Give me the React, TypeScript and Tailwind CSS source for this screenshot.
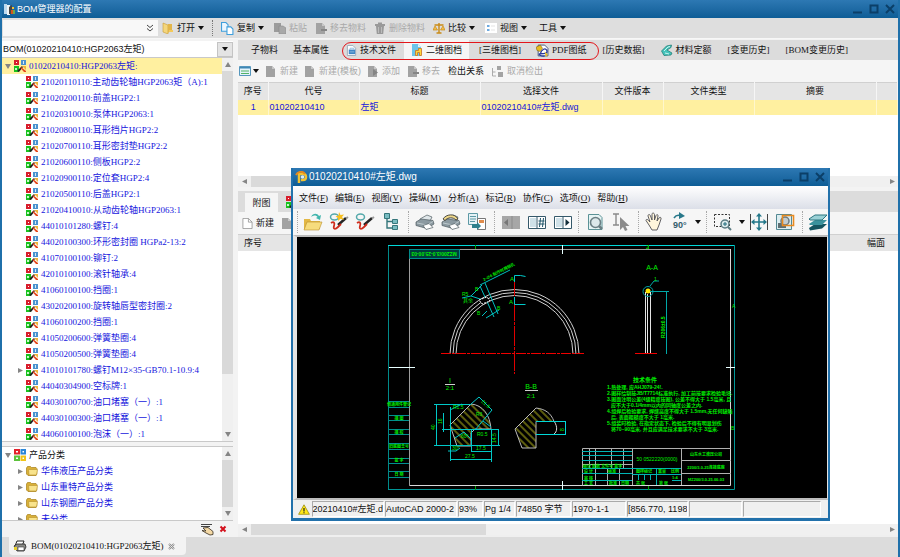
import type { ReactNode } from "react";
import { clsx } from "clsx";

const SANS = "font-['Liberation_Sans','Noto_Sans_CJK_SC',sans-serif]";
const SERIF = "font-['Liberation_Serif','Noto_Sans_CJK_SC',serif]";

const PARTS = [
  "21020110110:主动齿轮轴HGP2063矩（A):1",
  "21020200110:前盖HGP2:1",
  "21020310010:泵体HGP2063:1",
  "21020800110:耳形挡片HGP2:2",
  "21020700110:耳形密封垫HGP2:2",
  "21020600110:侧板HGP2:2",
  "21020900110:定位套HGP2:4",
  "21020500110:后盖HGP2:1",
  "21020410010:从动齿轮轴HGP2063:1",
  "44010101280:螺钉:4",
  "44020100300:环形密封圈 HGPa2-13:2",
  "41070100100:铆钉:2",
  "42010100100:滚针轴承:4",
  "41060100100:挡圈:1",
  "43020200100:旋转轴唇型密封圈:2",
  "41060100200:挡圈:1",
  "41050200600:弹簧垫圈:4",
  "41050200500:弹簧垫圈:4",
  "41010101780:螺钉M12×35-GB70.1-10.9:4",
  "44040304900:空标牌:1",
  "44030100700:油口堵塞（一）:1",
  "44030100300:油口堵塞（一）:1",
  "44060100100:泡沫（一）:1",
];

const CATEGORIES = ["华伟液压产品分类", "山东重特产品分类", "山东钢圈产品分类", "未分类"];

const MENUS = [
  ["文件", "F"],
  ["编辑", "E"],
  ["视图", "V"],
  ["操纵", "M"],
  ["分析", "A"],
  ["标记", "R"],
  ["协作", "C"],
  ["选项", "O"],
  ["帮助", "H"],
];

/* ---------- small icons ---------- */

function Icon({ size = 12, children }: { size?: number; children: ReactNode }) {
  return (
    <svg width={size} height={size} viewBox="0 0 12 12" className="shrink-0" aria-hidden="true">
      {children}
    </svg>
  );
}

function PartIcon() {
  return (
    <Icon>
      <path d="M0 0h5v5H0z" fill="#d81e2c" />
      <path d="M2 2h1v1H2z" fill="#fff" />
      <path d="M7 0h5v5H7z" fill="#4a92cf" />
      <path d="M9 1h1v3H9z" fill="#d5e8f5" />
      <path d="M0 6h5v6H0z" fill="#18c21e" />
      <path d="M1 8h2v2H1z" fill="#c9f5c9" />
      <path d="M3 11l5-5 1 1-4 5z" fill="#222" />
      <path d="M7 7l5 4v1h-2L6.500 8z" fill="#e5471b" />
      <path d="M8 6h4v4z" fill="#f0b43a" />
    </Icon>
  );
}

function CategoryIcon() {
  return (
    <Icon>
      <g fill="none" strokeWidth="2">
        <path d="M1 1h4v3.500H1z" stroke="#e3212b" />
        <path d="M7.500 1h3.500v3.500H7.500z" stroke="#2a86d8" />
        <path d="M1 7.500h4V11H1z" stroke="#5cc23c" />
        <path d="M7.500 7.500h3.500V11H7.500z" stroke="#f0c419" />
      </g>
    </Icon>
  );
}

function FolderIcon() {
  return (
    <Icon>
      <path d="M.5 3l1-1.500h3l1 1H10l.8 1v5.500L10 10.500H2L.5 9z" fill="#d9b037" stroke="#a67f1c" strokeWidth=".7" />
      <path d="M2.500 4.500h9l-1 5.500H3z" fill="#f8e38c" stroke="#b8902a" strokeWidth=".6" />
    </Icon>
  );
}

function OpenIcon() {
  return (
    <Icon>
      <path d="M1 1l5 2v9l-5-2z" fill="#f4d67c" stroke="#c79b36" strokeWidth=".6" />
      <path d="M6 2h4v6l-4 3z" fill="#e2b54a" />
      <path d="M7 8h4v2H7z" fill="#f3c95a" />
    </Icon>
  );
}

function CopyIcon() {
  return (
    <Icon size={13}>
      <path d="M.5.5h4l2 2v6h-6z" fill="#eaf6ff" stroke="#3f9fdc" />
      <path d="M5.500 4.500H9l2 2v5H5.500z" fill="#fff" stroke="#3f9fdc" />
    </Icon>
  );
}

function GrayDoc({ mark }: { mark?: string }) {
  return (
    <Icon>
      <path d="M1 1h6l3 3v8H1z" fill="#a2a2a2" />
      <path d="M7 1v3h3z" fill="#c8c8c8" />
      {mark && <path d={mark} fill="#858585" />}
    </Icon>
  );
}

function PasteIcon() {
  return (
    <Icon>
      <path d="M0 1h7v9H0z" fill="#9b9b9b" />
      <path d="M5 4h4l3 2v6H5z" fill="#a8a8a8" stroke="#8c8c8c" strokeWidth=".6" />
    </Icon>
  );
}

function TrashIcon() {
  return (
    <Icon>
      <path d="M1 2h10v2H1zM4 .5h4V2H4zM2 4h8l-.8 8H2.800z" fill="#999" />
      <path d="M4.500 5v6M7.500 5v6" stroke="#bbb" />
    </Icon>
  );
}

function ScaleIcon() {
  return (
    <Icon>
      <path d="M6 1v10M1.500 3h9M3.500 11h5" stroke="#c98a16" strokeWidth="1.400" />
      <path d="M0 8l2-4 2.500 4zM7.500 8L10 4l2 4z" fill="#f1be4a" stroke="#c98a16" strokeWidth=".7" />
    </Icon>
  );
}

function ListIcon() {
  return (
    <Icon>
      <path d="M0 1h12v10H0z" fill="#fff" />
      <path d="M2 4h2.500M2 8h2.500" stroke="#3f8fd6" strokeWidth="1.600" />
      <path d="M6 4h4M6 8h4" stroke="#e3e3e3" />
    </Icon>
  );
}

function GridIcon() {
  return (
    <Icon>
      <path d="M.5 1.500h11v9H.5z" fill="#e4f3fb" stroke="#5596bd" />
      <path d="M1 2h10v1.500H1z" fill="#3f87b4" />
      <path d="M2 6h8M2 8.500h8" stroke="#54b366" />
    </Icon>
  );
}

function TechDocIcon() {
  return (
    <Icon size={11}>
      <path d="M1.500.5h6l3 3v8h-9z" fill="#fff" stroke="#9aa9b8" />
      <path d="M3 5h7v5H3z" fill="#3f86c6" />
      <path d="M4.500 5V3.500h4V5M4 7.500h5" fill="none" stroke="#8db9de" />
    </Icon>
  );
}

function DrawingDocIcon() {
  return (
    <Icon>
      <path d="M1 0h6l3 3v9H1z" fill="#6cc4ea" />
      <path d="M7 0v3h3z" fill="#e2f5fd" />
      <path d="M4.500 11.500v-5h3v-2h3v7h-2v-3h-2v3z" fill="#ffd63b" stroke="#c8731d" strokeWidth=".8" />
    </Icon>
  );
}

function PdfIcon() {
  return (
    <Icon size={13}>
      <path d="M2 1h6l3 3v7H2z" fill="#fff" stroke="#30456f" strokeWidth=".8" />
      <path d="M0 3l4-2 2 3-2 3-3-1z" fill="#e6bd20" stroke="#7b5b07" strokeWidth=".5" />
      <path d="M4 9c1-4 5-6 6-3s-3 3-6 3 1 3 4 2" fill="none" stroke="#2a3a9b" strokeWidth="1.200" />
      <path d="M8 7l3 3-2 2z" fill="#e6bd20" />
    </Icon>
  );
}

function MaterialIcon() {
  return (
    <Icon>
      <path d="M.5 7l5-5 5-1-.5 2.500L6 6l5 3-1 2-7 .5z" fill="#46c3ba" stroke="#1a756e" strokeWidth=".7" />
      <path d="M3 7l4-4 2-.5M4 9l4 1" stroke="#c8f5f0" fill="none" />
    </Icon>
  );
}

function LinkIcon() {
  return (
    <Icon>
      <path d="M.5 3v8H4M.5 7h3" fill="none" stroke="#ababab" />
      <path d="M5 1h4v4H5zM6 7h5v5H6z" fill="#a3a3a3" />
    </Icon>
  );
}

function Caret({ className }: { className?: string }) {
  return (
    <svg width="6" height="4" viewBox="0 0 6 4" className={clsx("shrink-0", className)} aria-hidden="true">
      <path d="M0 0h6L3 4z" fill="currentColor" />
    </svg>
  );
}

function Arrow({ dir, className }: { dir: "up" | "down" | "left" | "right"; className?: string }) {
  const paths = {
    up: "M0 6h6L3 1z",
    down: "M0 1h6L3 6z",
    left: "M5 1v5L0 3.500z",
    right: "M1 1v5l5-2.500z",
  };
  return (
    <svg width="6" height="7" viewBox="0 0 6 7" className={clsx("shrink-0 text-[#858585]", className)} aria-hidden="true">
      <path d={paths[dir]} fill="currentColor" />
    </svg>
  );
}

function WindowButtons() {
  return (
    <div className="flex gap-1 text-[#0b3f68]">
      <button type="button" aria-label="最小化">
        <svg width="12" height="12" viewBox="0 0 12 12">
          <path d="M1 9.500h9" stroke="currentColor" strokeWidth="2" />
        </svg>
      </button>
      <button type="button" aria-label="最大化">
        <svg width="12" height="12" viewBox="0 0 12 12">
          <path d="M2.500 2.500h7v7h-7z" fill="none" stroke="currentColor" strokeWidth="2" />
        </svg>
      </button>
      <button type="button" aria-label="关闭">
        <svg width="12" height="12" viewBox="0 0 12 12">
          <path d="M2 2l8 8M10 2l-8 8" stroke="currentColor" strokeWidth="2" />
        </svg>
      </button>
    </div>
  );
}

/* ---------- building blocks ---------- */

interface ToolProps {
  icon?: ReactNode;
  label: string;
  menu?: boolean;
  disabled?: boolean;
  className?: string;
}

function Tool({ icon, label, menu, disabled, className }: ToolProps) {
  return (
    <button
      type="button"
      disabled={disabled}
      className={clsx("flex shrink-0 items-center gap-[3px] whitespace-nowrap", disabled && "text-[#a9a9a9]", className)}
    >
      {icon}
      {label}
      {menu && <Caret />}
    </button>
  );
}

function VScroll({ thumb }: { thumb: string }) {
  return (
    <div className="flex w-[11px] shrink-0 flex-col items-center bg-[#f0f0f0]">
      <div className="flex h-[13px] items-center"><Arrow dir="up" /></div>
      <div className="w-full flex-1">
        <div className={clsx("w-full bg-[#d9d9d9]", thumb)} />
      </div>
      <div className="flex h-[13px] items-center"><Arrow dir="down" /></div>
    </div>
  );
}

function HScroll({ thumb }: { thumb: string }) {
  return (
    <div className="flex h-[11px] shrink-0 items-center bg-[#f0f0f0]">
      <div className="flex w-[13px] justify-center"><Arrow dir="left" /></div>
      <div className="h-full flex-1">
        <div className={clsx("h-full bg-[#dadada]", thumb)} />
      </div>
      <div className="flex w-[13px] justify-center"><Arrow dir="right" /></div>
    </div>
  );
}

function TopToolbar() {
  return (
    <div className="flex h-5 shrink-0 items-center bg-[#dedede] pl-px">
      <div className="flex h-4 w-[155px] shrink-0 items-center bg-[#f8f8f8] pr-1">
        <input type="text" aria-label="搜索" className="h-full min-w-0 flex-1 outline-none" />
        <button type="button" aria-label="展开">
          <svg width="8" height="8" viewBox="0 0 8 8">
            <path d="M1 1l3 2.500L7 1M1 4.500L4 7l3-2.500" fill="none" stroke="#444" />
          </svg>
        </button>
      </div>
      <Tool icon={<OpenIcon />} label="打开" menu className="ml-1" />
      <div className="mx-2 h-4 border-l border-dotted border-[#777]" />
      <Tool icon={<CopyIcon />} label="复制" menu />
      <Tool icon={<PasteIcon />} label="粘贴" disabled className="ml-2.5" />
      <Tool icon={<GrayDoc mark="M6 7h6v2H6z" />} label="移去物料" disabled className="ml-2" />
      <Tool icon={<TrashIcon />} label="删除物料" disabled className="ml-2" />
      <Tool icon={<ScaleIcon />} label="比较" menu className="ml-2" />
      <Tool icon={<ListIcon />} label="视图" menu className="ml-2.5" />
      <Tool label="工具" menu className="ml-3" />
    </div>
  );
}

function PartsTree() {
  return (
    <div className="flex h-[385px] shrink-0 border-y border-[#c9c9c9] bg-white">
      <ul className={clsx("min-w-0 flex-1 overflow-hidden whitespace-nowrap leading-4 text-[#1616dd]", SERIF)}>
        <li>
          <div className="flex h-4 items-center bg-[#fff0a0] pl-[3px]">
            <Arrow dir="down" className="mr-[3px]" />
            <PartIcon />
            <span className="ml-[3px]">01020210410:HGP2063左矩:</span>
          </div>
          <ul>
            {PARTS.map((part) => (
              <li key={part} className="flex h-4 items-center pl-[15px]">
                <span className="w-[9px] shrink-0">{part.includes("M12") && <Arrow dir="right" />}</span>
                <PartIcon />
                <span className="ml-[3px]">{part}</span>
              </li>
            ))}
          </ul>
        </li>
      </ul>
      <VScroll thumb="h-[85%]" />
    </div>
  );
}

function CategoryTree() {
  return (
    <div className="mt-1 flex min-h-0 flex-1 border-y border-[#c9c9c9] bg-white">
      <ul className="min-w-0 flex-1 overflow-hidden leading-4">
        <li>
          <div className="flex h-4 items-center pl-[3px]">
            <Arrow dir="down" className="mr-[3px]" />
            <CategoryIcon />
            <span className="ml-[3px]">产品分类</span>
          </div>
          <ul className="text-[#1616dd]">
            {CATEGORIES.map((name) => (
              <li key={name} className="flex h-4 items-center pl-[15px]">
                <Arrow dir="right" className="mr-[3px]" />
                <FolderIcon />
                <span className="ml-[3px]">{name}</span>
              </li>
            ))}
          </ul>
        </li>
      </ul>
      <VScroll thumb="h-full" />
    </div>
  );
}

function Sidebar() {
  return (
    <aside className="flex w-[231px] shrink-0 flex-col">
      <div className="mt-0.5 flex h-4 shrink-0 items-center bg-white">
        <select
          aria-label="BOM"
          className={clsx("h-full min-w-0 flex-1 appearance-none pl-px text-[9px] outline-none", SANS)}
        >
          <option>BOM(01020210410:HGP2063左矩)</option>
        </select>
        <span className="flex h-[15px] w-4 items-center justify-center border border-[#c4c4c4] bg-[#e4e4e4]">
          <Caret />
        </span>
      </div>
      <PartsTree />
      <CategoryTree />
      <div className="flex h-4 shrink-0 items-center justify-end gap-[5px] pr-1.5">
        <button type="button" aria-label="编辑">
          <svg width="13" height="13" viewBox="0 0 13 13">
            <path d="M0 1.500h11M0 3.500h9" stroke="#444" />
            <path d="M2 5l5-.5 5 4v3L9 12 5 10 1 7.500l4 .5z" fill="#f4d9a6" stroke="#332b1d" strokeWidth=".8" />
          </svg>
        </button>
        <button type="button" aria-label="删除">
          <svg width="8" height="8" viewBox="0 0 8 8">
            <path d="M1.500 1.500l5 5M6.500 1.500l-5 5" stroke="#d3101c" strokeWidth="2" />
          </svg>
        </button>
      </div>
    </aside>
  );
}

const TABS: { label: string; icon?: ReactNode; className: string }[] = [
  { label: "子物料", className: "ml-[13px]" },
  { label: "基本属性", className: "ml-[15px]" },
  { label: "技术文件", icon: <TechDocIcon />, className: "ml-[17px]" },
  { label: "二维图档", icon: <DrawingDocIcon />, className: "ml-2 bg-[#f5f5f5] px-[7px]" },
  { label: "[三维图档]", className: "ml-2.5" },
  { label: "PDF图纸", icon: <PdfIcon />, className: "ml-[15px]" },
  { label: "[历史数据]", className: "ml-4" },
  { label: "材料定额", icon: <MaterialIcon />, className: "ml-4" },
  { label: "[变更历史]", className: "ml-4" },
  { label: "[BOM变更历史]", className: "ml-4" },
];

function FileTable() {
  const heads = ["序号", "代号", "标题", "选择文件", "文件版本", "文件类型", "摘要", ""];
  return (
    <table className="w-full table-fixed border-collapse">
      <colgroup>
        <col className="w-[30px]" />
        <col className="w-[91px]" />
        <col className="w-[121px]" />
        <col className="w-[122px]" />
        <col className="w-[61px]" />
        <col className="w-[91px]" />
        <col className="w-[122px]" />
        <col />
      </colgroup>
      <thead>
        <tr className="h-[17px] border-t border-[#d0d0d0] bg-[#e5e5e5]">
          {heads.map((head, i) => (
            <th key={i} className="border-r border-[#f6f6f6] p-0 font-normal">{head}</th>
          ))}
        </tr>
      </thead>
      <tbody className={clsx("text-[#1616dd]", SANS)}>
        <tr className="h-[15px] bg-[#fff0a0] [&>td]:border-r [&>td]:border-[#fff7cc] [&>td]:p-0 [&>td]:pl-px">
          <td className="text-center">1</td>
          <td>01020210410</td>
          <td>左矩</td>
          <td>01020210410#左矩.dwg</td>
          <td />
          <td />
          <td />
          <td />
        </tr>
      </tbody>
    </table>
  );
}

function MainPane() {
  return (
    <main className="flex min-w-0 flex-1 flex-col">
      <div className={clsx("relative mt-px flex h-5 shrink-0 items-stretch bg-[#dcdcdc]", SERIF)} role="tablist">
        {TABS.map((tab) => (
          <button
            key={tab.label}
            type="button"
            role="tab"
            aria-selected={tab.label === "二维图档"}
            className={clsx("flex shrink-0 items-center gap-[3px] whitespace-nowrap", tab.className)}
          >
            {tab.icon}
            {tab.label}
          </button>
        ))}
        <div className="pointer-events-none absolute left-[104px] top-0.5 h-[18px] w-[257px] rounded-full border border-[#e3161b]" />
      </div>
      <div className="flex h-[22px] shrink-0 items-center bg-[#f5f5f5] pl-px">
        <button type="button" aria-label="列表" className="flex items-center gap-0.5">
          <GridIcon />
          <Caret />
        </button>
        <Tool icon={<GrayDoc />} label="新建" disabled className="ml-[6px]" />
        <Tool icon={<GrayDoc />} label="新建(模板)" disabled className="ml-[6px]" />
        <Tool icon={<GrayDoc mark="M6 4v7l5-3.500z" />} label="添加" disabled className="ml-[6px]" />
        <Tool icon={<GrayDoc mark="M6 7h6v2H6z" />} label="移去" disabled className="ml-[7px]" />
        <Tool label="检出关系" className="ml-2" />
        <Tool icon={<LinkIcon />} label="取消检出" disabled className="ml-2" />
      </div>
      <div className="flex h-[105px] shrink-0 flex-col bg-white">
        <div className="flex-1"><FileTable /></div>
        <HScroll thumb="w-[88%]" />
      </div>
      <div className="mt-1 flex h-[21px] shrink-0 items-end gap-2 bg-[#dcdcdc] pl-[7px]">
        <button type="button" className="h-[19px] w-[33px] bg-[#f5f5f5]">附图</button>
        <div className="flex h-5 items-center"><PartIcon /></div>
      </div>
      <div className="flex h-[22px] shrink-0 items-center bg-[#f5f5f5] pl-1">
        <Tool
          icon={
            <Icon size={11}>
              <path d="M1 .5h6l4 4v7H1z" fill="#fff" stroke="#8a8a8a" strokeWidth=".8" />
              <path d="M7 .5v4h4" fill="none" stroke="#8a8a8a" strokeWidth=".8" />
            </Icon>
          }
          label="新建"
        />
        <span className="ml-[7px]"><GrayDoc /></span>
      </div>
      <div className="flex min-h-0 flex-1 flex-col bg-white">
        <div className="flex h-[17px] shrink-0 items-center justify-between border-t border-[#d0d0d0] bg-[#e5e5e5] pl-[6px] pr-[13px]">
          <span>序号</span>
          <span>幅面</span>
        </div>
        <div className="flex-1" />
        <HScroll thumb="w-[37%]" />
      </div>
      <div className="h-0.5 shrink-0 bg-[#efefef]" />
    </main>
  );
}

/* ---------- drawing viewer ---------- */

function ViewerButton({ label, children }: { label: string; children: ReactNode }) {
  return (
    <button type="button" aria-label={label} className="flex w-[26px] shrink-0 justify-center">
      <svg width="20" height="20" viewBox="0 0 20 20">{children}</svg>
    </button>
  );
}

function Separator({ className }: { className?: string }) {
  return <div className={clsx("h-[22px] shrink-0 border-l border-dotted border-[#a8a8a8]", className)} />;
}

function PenStrokes() {
  return (
    <g fill="none">
      <ellipse cx="5.500" cy="5" rx="4" ry="3" stroke="#55a9ab" strokeWidth="1.500" />
      <path d="M17 6L9 13" stroke="#252525" strokeWidth="2.500" />
      <path d="M17 6.500l2-1.500" stroke="#999" strokeWidth="2" />
      <path d="M2 11c3-2 4 0 3 3s1 4 4 1l3-3" stroke="#cf2d1d" strokeWidth="1.800" />
    </g>
  );
}

function PrinterShape() {
  return (
    <g stroke="#4d5a60" strokeWidth=".7">
      <path d="M5 7l7-4 5 2-2 4-9 1z" fill="#dfe6e9" />
      <path d="M1 10l5-3 12 1.500 1 3.500-7 4.500L1 13.500z" fill="#8c9aa1" />
      <path d="M2 11l10 2 6-3.500" fill="none" stroke="#d3dde0" />
      <path d="M8 13.500l6-2 4 4-7 2z" fill="#fff" />
    </g>
  );
}

function ViewerToolbar() {
  return (
    <div className="flex h-[26px] shrink-0 items-center overflow-hidden bg-[#f6f6f6]">
      <Separator className="ml-1 mr-0.5" />
      <ViewerButton label="打开">
        <path d="M1 7h6l1 2h9v8H1z" fill="#e3b845" />
        <path d="M4 10h15l-3 8H1z" fill="#f7dc7d" stroke="#b98f2d" strokeWidth=".6" />
        <path d="M8 5c2-4 6-4 8-1l2-1-1 5-4-2 1.500-1C13 3 11 3 8 5z" fill="#41b5ad" />
      </ViewerButton>
      <ViewerButton label="新建标记">
        <PenStrokes />
        <path d="M10 0l1.500 3L15 2.500 13 5l2 3-3.500-1.200L9 9V6L6.500 4.500l3-1z" fill="#f6bf1f" />
      </ViewerButton>
      <ViewerButton label="打开标记"><PenStrokes /></ViewerButton>
      <ViewerButton label="结构">
        <path d="M6 6v10h6M6 9.500h6" fill="none" stroke="#35767b" strokeWidth="1.400" />
        <path d="M3.500 1.500h5v5h-5zM11.500 7.500h5v4h-5zM11.500 13.500h5v4h-5z" fill="#79bcc1" stroke="#35767b" />
      </ViewerButton>
      <Separator className="ml-1 mr-[3px]" />
      <ViewerButton label="打印"><PrinterShape /></ViewerButton>
      <ViewerButton label="打印预览">
        <PrinterShape />
        <path d="M2 7c3-5 12-6 15 0l-2 1C12 5 7 5 4 8.500z" fill="#efd88a" stroke="#3a3a3a" strokeWidth=".9" />
      </ViewerButton>
      <ViewerButton label="转换">
        <path d="M1.500 1.500h9v11h-9z" fill="#e5f2f6" stroke="#5d99a5" />
        <path d="M3 4.500h6M3 7h6M3 9.500h5" stroke="#5d99a5" />
        <path d="M10.500 6.500h8v11h-8z" fill="#fff" stroke="#777" />
        <path d="M12 8h5v3h-5z" fill="#e08c4c" />
        <path d="M5 12h5v-2l4 4-4 4v-2H5z" fill="#2d7f8c" />
      </ViewerButton>
      <Separator className="ml-1 mr-[3px]" />
      <ViewerButton label="上一页">
        <path d="M1 4h18v13H1z" fill="#a7a7a7" />
        <path d="M11 4v13" stroke="#8b8b8b" />
        <path d="M7 7v7l-4-3.500z" fill="#777" />
      </ViewerButton>
      <ViewerButton label="转到页">
        <path d="M1.500 4.500h17v12h-17z" fill="#fff" stroke="#35596a" />
        <path d="M3 6h6v9H3z" fill="#cfe1e8" />
        <path d="M10 4v13" stroke="#35596a" />
        <path d="M13.500 6l-1 9M16.500 6l-1 9M11.500 9h6M11.500 12h6" stroke="#1f5468" />
      </ViewerButton>
      <ViewerButton label="下一页">
        <path d="M1.500 4.500h17v12h-17z" fill="#fff" stroke="#35596a" />
        <path d="M3 6h6v9H3z" fill="#cfe1e8" />
        <path d="M10 4v13" stroke="#35596a" />
        <path d="M12.500 7v7l4-3.500z" fill="#15303c" />
      </ViewerButton>
      <Separator className="ml-0.5 mr-[3px]" />
      <ViewerButton label="查找">
        <path d="M3.500 2.500H14l3 3v12H3.500z" fill="#e6f4f4" stroke="#5b9296" />
        <circle cx="10.500" cy="10.500" r="5" fill="#dce8ea" stroke="#6b7f84" strokeWidth="1.600" />
        <path d="M14 14l3 3" stroke="#6b7f84" strokeWidth="2.500" />
      </ViewerButton>
      <ViewerButton label="选择文本">
        <path d="M2 2h6M5 2v11M2 13h6" stroke="#8b8b8b" strokeWidth="1.400" />
        <path d="M9 5v13l3-3 2 4 2.500-1-2-4h4z" fill="#8b8b8b" />
      </ViewerButton>
      <Separator className="ml-1 mr-0.5" />
      <ViewerButton label="平移">
        <path d="M5 13L2 8.500c0-1.500 1.500-1.500 2.500 0L6 10 4 4c0-2 2-2 2.500 0L8 8V2.500c0-2 2-2 2.500 0V8l1.500-4.500c1-1.500 2-1 2 .5L13 9l2-3c1-1.500 2.500-.5 2 1l-2 6-2 5H8z" fill="#fff6dc" stroke="#4f4f55" strokeWidth=".9" />
      </ViewerButton>
      <ViewerButton label="旋转">
        <path d="M4 6c2-3 5-3 7-2" fill="none" stroke="#28788a" strokeWidth="1.600" />
        <path d="M9 0l6 4-6 3z" fill="#28788a" />
        <text x="3" y="16" fontSize="9" fontWeight="700" fill="#325d6b">90°</text>
      </ViewerButton>
      <Caret className="mx-0.5" />
      <Separator className="mx-[3px]" />
      <ViewerButton label="窗口缩放">
        <path d="M1.500 2.500h15v12h-15z" fill="none" stroke="#333" strokeDasharray="2 1.500" />
        <circle cx="12" cy="12" r="4" fill="#dcebed" stroke="#5b7b82" strokeWidth="1.500" />
        <path d="M12 10v4M10 12h4" stroke="#216b7a" />
        <path d="M15 15l3 3" stroke="#5b7b82" strokeWidth="2" />
      </ViewerButton>
      <Caret className="ml-[3px] mr-px" />
      <ViewerButton label="适合窗口">
        <path d="M1.500 2v16M18.500 2v16" stroke="#444" />
        <path d="M10 3v14M3 10h14" stroke="#24788a" strokeWidth="1.600" />
        <path d="M10 1l3 3.500H7zM10 19l3-3.500H7zM2 10l3.500-3v6zM18 10l-3.500-3v6z" fill="#24788a" />
      </ViewerButton>
      <ViewerButton label="放大">
        <path d="M1.500 2.500h15v15h-15z" fill="#dcedf0" stroke="#538993" />
        <path d="M3 11h8v5H3z" fill="#5f6f73" />
        <circle cx="10" cy="9" r="4" fill="#c2ccd0" stroke="#6b797e" strokeWidth="1.500" />
        <path d="M7.500 3.500h11v10h-11z" fill="none" stroke="#e98a1f" strokeWidth="1.600" />
      </ViewerButton>
      <Separator className="ml-1 mr-0.5" />
      <ViewerButton label="图层">
        <path d="M1 16l6-4h12l-5 4.500-12 2z" fill="#155460" />
        <path d="M1 12l6-4h12l-5 5H2z" fill="#3b929d" />
        <path d="M1 7l6-4h12l-5 5H2z" fill="#9ad0d5" stroke="#2d7681" />
      </ViewerButton>
    </div>
  );
}

const NOTES = [
  "1.热处理, 应AHJ079-24!.",
  "2.图样绘制按JB/T7714标准执行, 加工前按要求检验毛坯.",
  "3.图面注明公差(4级精度按图), 公差不得大于 1.5毫米, 且",
  "  应不大于0.1/4mm以内的同轴度公差之内.",
  "4.组焊后检验要求, 焊缝高度不得大于 1.5mm,无任何缺陷",
  "  后, 表面粗糙度不大于 1毫米.",
  "5.组装时检验, 在指定状态下, 检验后不得有明显划伤",
  "  将70~90毫米, 并且应满足技术要求不大于 3毫米.",
];

const STUBS: [number, string][] = [
  [406, "借通用件登记"],
  [420, "描 图"],
  [434, "描 校"],
  [448, "旧底图总号"],
  [462, "签 字"],
  [476, "日 期"],
];

function Drawing() {
  return (
    <svg
      viewBox="297 237 530 261"
      className={clsx("block w-full bg-black", SANS)}
      role="img"
      aria-label="01020210410#左矩.dwg"
    >
      <defs>
        <pattern id="hatch" width="5" height="5" patternUnits="userSpaceOnUse" patternTransform="rotate(-45)">
          <path d="M2 0v5" stroke="#b9b91c" />
        </pattern>
      </defs>

      {/* sheet frame */}
      <g fill="none" strokeWidth="1">
        <path d="M388.500 489.500V245.500" stroke="#008a8a" />
        <path d="M388 245.500h347" stroke="#00d8d8" />
        <path d="M734.500 245v244.500H388" stroke="#009696" />
        <path d="M409.500 485.500v-236h321" stroke="#9c9c9c" />
        <path d="M730.500 249v236.500h-321" stroke="#d8d8d8" />
        <path d="M562.500 245v9M562.500 481v9M389 367.500h26M726 367.500h9" stroke="#e8ffff" />
        <path d="M475.500 245v4M648.500 245v4M475.500 486v4M648.500 486v4" stroke="#00a000" />
        <path d="M409.500 249.500h50v9h-50z" fill="#003c3c" stroke="#008a8a" />
        <path
          d="M389 401.500h20M389 407.500h20M389 415.500h20M389 420.500h20M389 429.500h20M389 434.500h20M389 443.500h20M389 449.500h20M389 458.500h20M389 463.500h20M389 471.500h20M389 477.500h20"
          stroke="#008f8f"
        />
      </g>

      {/* arc body */}
      <g fill="none" stroke="#d0d0d0">
        <path d="M450 354a64.500 64.500 0 0 1 129 0" />
        <path d="M453 354a61.500 61.500 0 0 1 123 0" />
        <path d="M456 354a58.500 58.500 0 0 1 117 0" />
      </g>
      <path d="M441 353.500h143" stroke="#f00000" strokeDasharray="10 1 3 1" />
      <path d="M514.500 276v98" stroke="#e00000" strokeDasharray="20 1 3 1" />
      <path d="M514.500 282v-6.500h6l5 1M514.500 297v7.500h11" fill="none" stroke="#00caca" />
      <path
        d="M471 296l11-11M480 286l14 31M485 283l13 31M471 296l12 4M480 285l30-15M486 318l13-8M482 316l5-5M462 298l9-2"
        fill="none"
        stroke="#00c0c0"
      />
      <path d="M479 300l8-3 3 4-8 3z" stroke="#fff" strokeDasharray="2 1" />

      {/* detail I */}
      <path d="M450 425l21-21c12 1 19 11 20 25h-16l-4 4v13h-14z" fill="url(#hatch)" stroke="#b8b8b8" />
      <g stroke="#00c8c8" fill="none">
        <path d="M436.500 404v41M434 404.500h37M434 445.500h37M442 429.500h57M498.500 430v15M471 445.500h29M450.500 407v54M491.500 430v32M450 459.500h41M471.500 430v22M471 451.500h20M443.500 413v19" />
        <path d="M471 404l8-7 13 13-17 20M450 410l12-6M455 438l9-6 8 8M448 451h8l4-3M491 427l-8-6" />
      </g>

      {/* section B-B */}
      <path d="M536 421.500V448h-14l-7-19 21-21c9 1 15 5 18 13.500z" fill="url(#hatch)" stroke="#b8b8b8" />
      <path d="M554 421c4 6 3 11 0 13" fill="none" stroke="#d8d8d8" />
      <path d="M536 421.500h30M536 434.500h30M565.500 421v14" stroke="#00d8d8" />
      <path d="M525 390.500h13M445 384.500h10" stroke="#d0d0d0" />

      {/* section A-A */}
      <path d="M645.500 292v62M647.500 294v60M650.500 291v63" stroke="#e4e4e4" />
      <circle cx="648" cy="291.500" r="5" fill="none" stroke="#00a0a0" />
      <circle cx="648" cy="291" r="2.500" fill="#ffe600" />
      <path d="M650 291.500h19M666.500 292v62M650 286l4-5h5" fill="none" stroke="#00a8a8" />
      <path d="M635 353.500h22" stroke="#f00000" />

      {/* title block */}
      <g fill="none">
        <path d="M582.500 485.500v-37h148M589.500 448v20M595.500 448v37M611.500 448v20M607.500 468v17M623.500 448v20M619.500 468v17M632.500 448v37M681.500 448v37M582 464.500h50M681 460.500h50M681 473.500h50" stroke="#b0b0b0" />
        <path d="M582 451.500h50M582 455.500h50M582 460.500h50M582 473.500h50M582 480.500h50M582 468.500h50M632 468.500h49M632 474.500h49M656.500 468v17M638.500 474v6M644.500 474v6M650.500 474v6M672 480.500h9" stroke="#00b4b4" />
      </g>

      <g fill="#00f000" fontSize="5">
        <g fontSize="4" fontWeight="700" textAnchor="middle">
          {STUBS.map(([y, text]) => (
            <text key={y} x="399" y={y}>{text}</text>
          ))}
        </g>
        <text x="434" y="252" fontWeight="700" textAnchor="middle" transform="rotate(180 434 252)">MZ200/3.0-25.00-03</text>
        <text x="510" y="281" fontSize="6">A</text>
        <text x="509" y="304" fontSize="6">A</text>
        <text x="484" y="281" fontSize="4" fontWeight="700" transform="rotate(-27 484 281)">2-∅6 配作时两销孔</text>
        <text x="462" y="296">R5</text>
        <text x="463" y="302">其余</text>
        <text x="477" y="315">B</text>
        <text x="497" y="310">B</text>
        <text x="475" y="291">B</text>
        <text x="450" y="383" fontSize="7" textAnchor="middle">I</text>
        <text x="450" y="390" fontSize="6" textAnchor="middle">2:1</text>
        <text x="531" y="389" fontSize="7" textAnchor="middle">B-B</text>
        <text x="531" y="398" fontSize="6" textAnchor="middle">2:1</text>
        <text x="435" y="430" transform="rotate(-90 435 430)">40</text>
        <text x="442" y="424" transform="rotate(-90 442 424)">16</text>
        <text x="496" y="443" transform="rotate(-90 496 443)">14.5</text>
        <text x="564" y="431" transform="rotate(-90 564 431)">8</text>
        <text x="453" y="409">R1.5</text>
        <text x="481" y="402" transform="rotate(42 481 402)">21.5</text>
        <text x="476" y="416">R3</text>
        <text x="461" y="438">60°</text>
        <text x="477" y="436">R0.5</text>
        <text x="476" y="450">17.5</text>
        <text x="465" y="458">27.5</text>
        <text x="452" y="450">30°</text>
        <text x="652" y="270" fontSize="7" textAnchor="middle">A-A</text>
        <text x="654" y="281">1</text>
        <text x="665" y="338" fontWeight="700" transform="rotate(-90 665 338)">R206±0.5</text>
        <text x="646" y="249">2</text>
        <text x="732" y="308">A</text>
        <text x="731" y="430">B</text>
        <text x="645" y="382" fontSize="6" fontWeight="700" textAnchor="middle">技术条件</text>
        <g fontWeight="700">
          {NOTES.map((line, i) => (
            <text key={line} x={line.startsWith(" ") ? 611 : 607} y={389 + i * 6}>
              {line.trim()}
            </text>
          ))}
        </g>
        <text x="657" y="461" textAnchor="middle">50 0522220(0000)</text>
        <g fontSize="4" fontWeight="700">
          <text x="706" y="456" textAnchor="middle">山东水工液压公司</text>
          <text x="706" y="469" textAnchor="middle">2200/3.0-25连接底座</text>
          <text x="706" y="481" textAnchor="middle">MZ200/3.0-25.00-03</text>
          <text x="583" y="468">标记 处数 文件号 签字</text>
          <text x="584" y="473">设 计</text>
          <text x="608" y="473">标准</text>
          <text x="584" y="480">审 核</text>
          <text x="584" y="485">工 艺</text>
          <text x="609" y="485">批准</text>
          <text x="621" y="485">日期</text>
          <text x="636" y="473">图样标记</text>
          <text x="658" y="473">重量</text>
          <text x="671" y="473">比例</text>
          <text x="672" y="479">1:4</text>
          <text x="636" y="485">共 张</text>
          <text x="659" y="485">第 张</text>
        </g>
      </g>
    </svg>
  );
}

const STATUS = [
  { text: "20210410#左矩.d", className: "ml-px w-[72px] justify-end" },
  { text: "AutoCAD 2000-2", className: "w-[72px]" },
  { text: "93%", className: "w-[25px]" },
  { text: "Pg 1/4", className: "w-[31px]" },
  { text: "74850 字节", className: "w-[55px]" },
  { text: "1970-1-1", className: "w-[54px]" },
  { text: "[856.770, 1198", className: "w-[61px]" },
  { text: "", className: "w-[53px]" },
  { text: "", className: "w-[78px]" },
];

function DrawingWindow() {
  return (
    <section className="absolute left-[289px] top-[168px] flex w-[539px] flex-col border-x-2 border-b-[3px] border-[#2271ab] bg-[#f0f0f0]">
      <header className={clsx("flex h-[18px] items-center bg-linear-to-b from-[#2d78b3] to-[#0d5d96] px-0.5 text-[10px] text-white", SANS)}>
        <svg width="13" height="13" viewBox="0 0 13 13" aria-hidden="true">
          <path d="M4 12V3h4c4 0 4 6 0 6H6" fill="none" stroke="#f1c232" strokeWidth="2.500" />
          <path d="M1 4c2-4 7-4 9-1" fill="none" stroke="#e58a1e" strokeWidth="2" />
          <circle cx="7.500" cy="6" r="1.800" fill="#d8ecfa" />
        </svg>
        <h2 className="ml-px flex-1">01020210410#左矩.dwg</h2>
        <WindowButtons />
      </header>
      <nav className={clsx("flex h-[23px] items-center gap-[7px] bg-linear-to-b from-white to-[#dcdfe8] pl-[6px]", SERIF)}>
        {MENUS.map(([name, key]) => (
          <button key={key} type="button" className="whitespace-nowrap">
            {name}(<u>{key}</u>)
          </button>
        ))}
      </nav>
      <ViewerToolbar />
      <div className="border-b-2 border-l-4 border-r border-t-2 border-x-[#e4e4e4] border-y-[#bcbcbc]">
        <Drawing />
      </div>
      <footer className="flex h-[18px] items-center gap-px pl-[5px]">
        <svg width="12" height="11" viewBox="0 0 12 11" className="shrink-0" aria-label="警告">
          <path d="M6 .8L11.400 10.300H.6z" fill="#ffe817" stroke="#9a8b12" strokeWidth=".8" />
          <path d="M6 4v3.500M6 8.300v1" stroke="#222" strokeWidth="1.200" />
        </svg>
        {STATUS.map((cell, i) => (
          <span
            key={i}
            className={clsx(
              "flex h-4 shrink-0 items-center overflow-hidden whitespace-nowrap border border-b-white border-l-[#aaa] border-r-white border-t-[#aaa]",
              cell.className
            )}
          >
            {cell.text}
          </span>
        ))}
      </footer>
    </section>
  );
}

export default function App() {
  return (
    <div
      className={clsx(
        "relative flex h-screen flex-col overflow-hidden border-l-2 border-r-2 border-[#1f70aa] bg-[#f3f3f3] text-[9px] leading-3 text-[#111]",
        SANS
      )}
    >
      <header className="flex h-[18px] shrink-0 items-center bg-linear-to-b from-[#2d78b3] to-[#0d5d96] px-0.5 text-white">
        <svg width="11" height="12" viewBox="0 0 11 12" aria-hidden="true">
          <path d="M0 1h3v10H0z" fill="#bcd9ee" />
          <path d="M3 2h3v10H3z" fill="#f0f4f6" />
          <path d="M5 4l3-2v9H5z" fill="#444" />
          <path d="M8 4h2v2H8z" fill="#f3c130" />
          <path d="M7 7h2v4H7z" fill="#d4541e" />
          <path d="M9 7h2v4H9z" fill="#6aa84f" />
        </svg>
        <h1 className="ml-0.5 flex-1">BOM管理器的配置</h1>
        <WindowButtons />
      </header>
      <TopToolbar />
      <div className="flex min-h-0 flex-1 gap-[5px] border-t border-[#f7f7f7]">
        <Sidebar />
        <MainPane />
      </div>
      <footer className="h-5 shrink-0 bg-[#dcdcdc] pl-[7px]">
        <div className={clsx("flex h-[18px] w-[177px] items-center rounded-b bg-[#f3f3f3] pl-1", SERIF)}>
          <svg width="14" height="12" viewBox="0 0 14 12" aria-hidden="true">
            <path d="M4 1h7l-2 5H2z" fill="#fff" stroke="#222" />
            <path d="M1 6l3-2h8l1 3-2 4H4z" fill="#8a8a86" stroke="#222" strokeWidth=".8" />
            <path d="M5 7h6v3.500H5z" fill="#fff" stroke="#333" strokeWidth=".6" />
            <path d="M1 7h3v3H1z" fill="#e7cf2f" />
          </svg>
          <span className="ml-1">BOM(01020210410:HGP2063左矩)</span>
          <button type="button" aria-label="关闭标签" className="ml-1">
            <svg width="7" height="7" viewBox="0 0 7 7">
              <path d="M1 1l5 5M6 1L1 6" stroke="#8c8c8c" strokeWidth="2" />
              <path d="M1 1l5 5M6 1L1 6" stroke="#fff" strokeWidth=".6" />
            </svg>
          </button>
        </div>
      </footer>
      <DrawingWindow />
    </div>
  );
}
